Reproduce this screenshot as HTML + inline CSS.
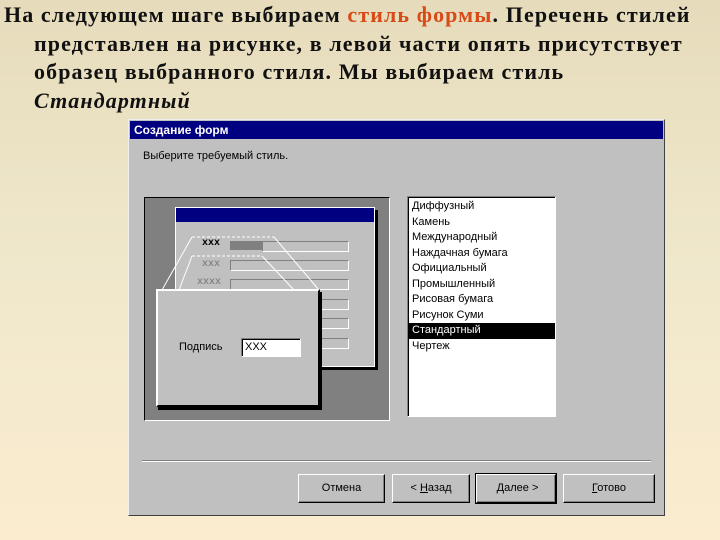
<!DOCTYPE html>
<html><head><meta charset="utf-8"><style>
*{margin:0;padding:0;box-sizing:border-box}
body{width:720px;height:540px;overflow:hidden;background:linear-gradient(#e6dcbc,#f0e8cc 50%,#fbeccf);position:relative;font-family:"Liberation Sans",sans-serif}
.t{position:absolute;left:4px;top:1px;width:716px;font-family:"Liberation Serif",serif;font-weight:bold;font-size:22px;letter-spacing:1.1px;line-height:28.5px;color:#111;white-space:nowrap}
.t span.l{display:block;padding-left:30px}
.r{color:#d84b18}
.a{position:absolute}
.dlg{left:128px;top:119px;width:537px;height:397px;background:#c0c0c0;border:1px solid #404040;border-top-color:#eee;border-left-color:#eee}
.tb{left:130px;top:121px;width:533px;height:18px;background:#000080;color:#fff;font-weight:bold;font-size:12px;line-height:18px;padding-left:4px}
.s{font-size:11px;color:#000}
.btn{top:474px;height:29px;background:#c0c0c0;border:1px solid;border-color:#fff #000 #000 #fff;box-shadow:inset -1px -1px #808080;font-size:11px;text-align:center;line-height:27px}
.list{left:407px;top:196px;width:149px;height:221px;background:#fff;border:1px solid;border-color:#808080 #fff #fff #808080;box-shadow:inset 1px 1px #000}
.list div{height:15.5px;line-height:15.5px;padding-left:4px;font-size:11px}
.f{height:11px;border:1px solid;border-color:#808080 #fff #fff #808080;background:#c0c0c0}
</style></head><body>
<div class="t">На следующем шаге выбираем <span class="r">стиль формы</span>. Перечень стилей<span class="l">представлен на рисунке, в левой части опять присутствует</span><span class="l">образец выбранного стиля. Мы выбираем стиль</span><span class="l"><i>Стандартный</i></span></div>
<div class="a dlg"></div>
<div class="a tb">Создание форм</div>
<div class="a s" style="left:143px;top:150px">Выберите требуемый стиль.</div>
<div class="a" style="left:144px;top:197px;width:246px;height:224px;background:#808080;border:1px solid;border-color:#000 #fff #fff #000"></div>
<div class="a" style="left:175px;top:207px;width:200px;height:160px;background:#c0c0c0;border:1px solid #fff;box-shadow:3px 3px #000"></div>
<div class="a" style="left:176px;top:208px;width:198px;height:14px;background:#000080"></div>
<div class="a" style="left:202px;top:238px;font:bold 10px 'Liberation Mono',monospace;color:#000">xxx</div>
<div class="a" style="left:202px;top:259px;font:bold 10px 'Liberation Mono',monospace;color:#888">xxx</div>
<div class="a" style="left:197px;top:277px;font:bold 10px 'Liberation Mono',monospace;color:#888">xxxx</div>
<div class="a" style="left:230px;top:241px;width:32px;height:9px;background:#808080"></div>
<div class="a f" style="left:262px;top:241px;width:87px"></div>
<div class="a f" style="left:230px;top:260px;width:119px"></div>
<div class="a f" style="left:230px;top:279px;width:119px"></div>
<div class="a f" style="left:230px;top:299px;width:119px"></div>
<div class="a f" style="left:230px;top:318px;width:119px"></div>
<div class="a f" style="left:230px;top:338px;width:119px"></div>
<svg class="a" style="left:144px;top:197px" width="246" height="224"><g stroke="#fff" fill="none"><path d="M48 40h82M48 59h70" stroke-dasharray="3 2"/><path d="M48 40L18 93M48 59L35 93M118 59L150 93M130 40L175 93"/></g></svg>
<div class="a" style="left:156px;top:289px;width:164px;height:118px;background:#c0c0c0;border:2px solid #fff;box-shadow:2px 3px #000;border-right-color:#000;border-bottom-color:#000"></div>
<div class="a s" style="left:179px;top:341px">Подпись</div>
<div class="a" style="left:241px;top:338px;width:60px;height:19px;background:#fff;border:1px solid;border-color:#808080 #fff #fff #808080;box-shadow:inset 1px 1px #000;font-size:11px;line-height:17px;padding-left:3px">XXX</div>
<div class="a list" style="padding-top:2px">
<div>Диффузный</div><div>Камень</div><div>Международный</div><div>Наждачная бумага</div><div>Официальный</div><div>Промышленный</div><div>Рисовая бумага</div><div>Рисунок Суми</div><div style="background:#000;color:#fff">Стандартный</div><div>Чертеж</div></div>
<div class="a" style="left:142px;top:460px;width:509px;height:2px;border-top:1px solid #808080;border-bottom:1px solid #fff"></div>
<div class="a btn" style="left:298px;width:87px">Отмена</div>
<div class="a btn" style="left:392px;width:78px">&lt; <u>Н</u>азад</div>
<div class="a btn" style="left:476px;width:80px;outline:1px solid #000">&nbsp;<u>Д</u>алее &gt;</div>
<div class="a btn" style="left:563px;width:92px"><u>Г</u>отово</div>
</body></html>
